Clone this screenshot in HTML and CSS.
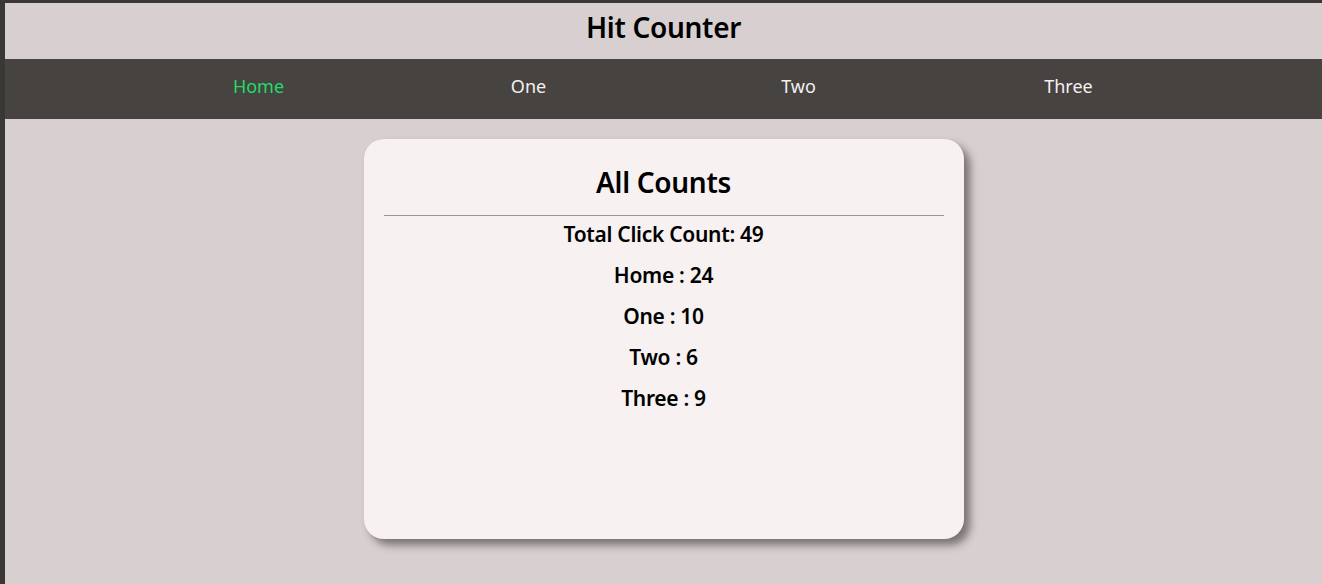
FILE: index.html
```html
<!DOCTYPE html>
<html lang="en">
<head>
<meta charset="utf-8">
<title>Hit Counter</title>
<link rel="stylesheet" href="styles.css">
</head>
<body>
<div class="app">
  <header class="header"><h1 class="title">Hit Counter</h1></header>
  <nav class="nav">
    <ul class="nav-list">
      <li class="nav-item active">Home</li>
      <li class="nav-item">One</li>
      <li class="nav-item">Two</li>
      <li class="nav-item">Three</li>
    </ul>
  </nav>
  <main class="main">
    <section class="card">
      <h2 class="card-title">All Counts</h2>
      <hr class="divider">
      <p class="row">Total Click Count: 49</p>
      <p class="row">Home : 24</p>
      <p class="row">One : 10</p>
      <p class="row">Two : 6</p>
      <p class="row">Three : 9</p>
    </section>
  </main>
</div>
</body>
</html>
```
FILE: styles.css
```css
html, body {
  margin: 0;
  padding: 0;
  height: 100%;
}
body {
  background: #3a3835;
  font-family: "Noto Sans", "DejaVu Sans", sans-serif;
  overflow: hidden;
}
.app {
  margin: 3px 0 0 5px;
  background: #d8cfd0;
  min-height: calc(100% - 3px);
  display: flex;
  flex-direction: column;
}
.header {
  height: 56px;
  box-sizing: border-box;
  padding-bottom: 8px;
  display: flex;
  align-items: center;
  justify-content: center;
}
.title {
  margin: 0;
  font-size: 28px;
  font-weight: 600;
  color: #000;
  letter-spacing: -0.3px;
}
.nav {
  background: #474341;
  height: 60px;
  box-sizing: border-box;
  padding-bottom: 6px;
  display: flex;
  justify-content: center;
}
.nav-list {
  list-style: none;
  margin: 0;
  padding: 0;
  width: 1080px;
  display: flex;
  align-items: center;
}
.nav-item {
  flex: 1;
  text-align: center;
  font-size: 18px;
  color: #f4f0ef;
}
.nav-item.active {
  color: #1fdc6a;
}
.main {
  display: flex;
  justify-content: center;
  padding-top: 20px;
}
.card {
  width: 600px;
  height: 400px;
  box-sizing: border-box;
  padding: 0 20px;
  background: #f7f1f1;
  border-radius: 20px;
  box-shadow: 6px 6px 8px rgba(0, 0, 0, 0.45);
  text-align: center;
}
.card-title {
  margin: 0;
  padding-top: 26px;
  height: 50px;
  font-size: 28px;
  font-weight: 600;
  line-height: 34px;
  letter-spacing: -0.3px;
}
.divider {
  margin: 0;
  border: 0;
  border-top: 1px solid #9a9696;
}
.row {
  margin: 0;
  height: 41px;
  line-height: 36px;
  font-size: 21px;
  font-weight: 600;
  letter-spacing: -0.3px;
}
```
